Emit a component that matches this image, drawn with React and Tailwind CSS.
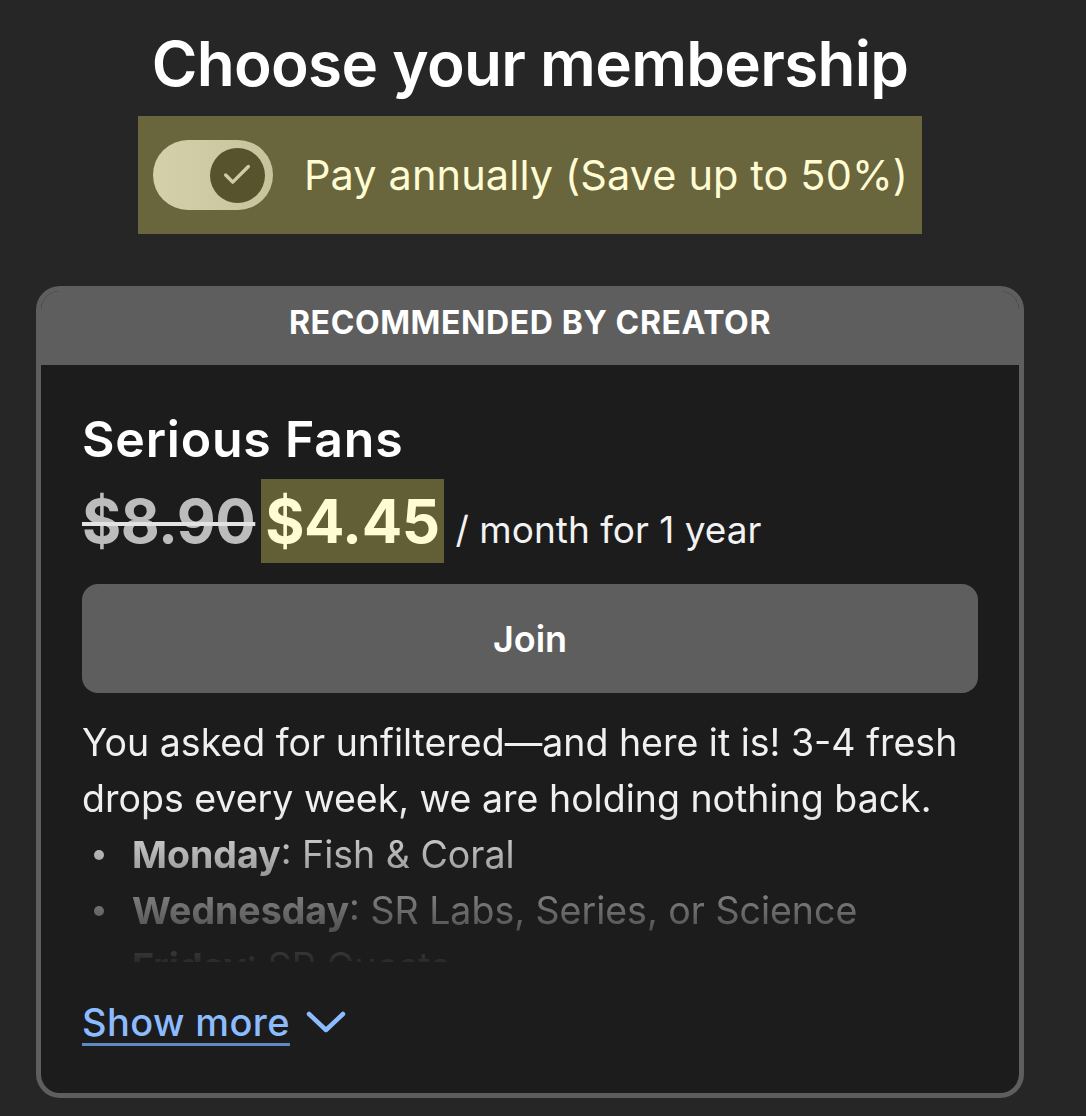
import { Check } from 'lucide-react'

const schedule = [
  { day: 'Monday', what: 'Fish & Coral' },
  { day: 'Wednesday', what: 'SR Labs, Series, or Science' },
  { day: 'Friday', what: 'SR Guests' },
]

const App = () => {
  return (
    <div className="min-h-screen bg-[#262626] font-['Inter',sans-serif]">
      <div className="w-[988px] ml-[36px] pt-[28px] flex flex-col items-center">

        {/* Heading */}
        <h1 className="text-[62px] leading-[72px] font-semibold text-white tracking-[-0.7px]">
          Choose your membership
        </h1>

        {/* Annual toggle */}
        <div className="mt-[16px] h-[118px] flex items-center pl-[15px] pr-[14px] bg-[#69653d]">
          <div className="w-[120px] h-[70px] rounded-full bg-gradient-to-r from-[#d4d0aa] to-[#c7c39b] flex items-center justify-end pr-[8px]">
            <div className="w-[55px] h-[55px] rounded-full bg-[#57532d] flex items-center justify-center">
              <Check size={34} strokeWidth={2.4} className="text-[#d0cca5]" />
            </div>
          </div>
          <span className="ml-[31px] text-[41.5px] leading-[48px] text-[#fffbd3] tracking-[0.1px]">
            Pay annually (Save up to 50%)
          </span>
        </div>

        {/* Tier card */}
        <div className="mt-[52px] w-full rounded-[24px] border-[5px] border-[#5e5e5e] bg-[#1c1c1c] overflow-hidden">
          <div className="h-[74px] pt-[16px] bg-[#5e5e5e] text-center">
            <p className="text-[32px] leading-[32px] font-bold text-white tracking-[0.6px]">RECOMMENDED BY CREATOR</p>
          </div>

          <div className="px-[41px] pt-[46px] pb-[51px]">
            <h2 className="text-[50px] leading-[56px] font-semibold text-white tracking-[0.8px]">Serious Fans</h2>

            <div className="mt-[12px] flex items-baseline">
              <span className="text-[60px] leading-[84px] font-bold text-[#bcbcbc] line-through decoration-[#e2e2e2] decoration-[4px] tracking-[-0.5px]">$8.90</span>
              <span className="ml-[6px] px-[4px] text-[60px] leading-[84px] font-bold text-[#fffbd3] bg-[#625e36] tracking-[-0.5px]">$4.45</span>
              <span className="ml-[12px] text-[37px] text-[#f2f2f2]">/ month for 1 year</span>
            </div>

            <button className="mt-[21px] w-full h-[109px] rounded-[16px] bg-[#5e5e5e] text-[36px] font-semibold text-white">
              Join
            </button>

            <div className="mt-[22px] h-[247px] overflow-hidden text-[37.5px] leading-[56px] text-[#f0f0f0] [mask-image:linear-gradient(to_bottom,black_92px,transparent_258px)]">
              <p>You asked for unfiltered—and here it is! 3-4 fresh drops every week, we are holding nothing back.</p>
              {schedule.map(item => (
                <div key={item.day} className="flex items-center">
                  <span className="ml-[12px] w-[10px] h-[10px] rounded-full bg-[#f0f0f0]" />
                  <span className="ml-[28px]"><b className="font-bold">{item.day}</b>: {item.what}</span>
                </div>
              ))}
            </div>

            <button className="mt-[40px] flex items-center text-[38px] leading-[40px] font-medium text-[#8cbcff] tracking-[0.4px]">
              <span className="underline decoration-[#5f88c4] decoration-[3px] underline-offset-[7px]">Show more</span>
              <svg width="40" height="26" viewBox="0 0 40 26" className="ml-[16px]" fill="none" stroke="currentColor" strokeWidth="4.5" strokeLinecap="round" strokeLinejoin="round">
                <path d="M3 5 L20 21 L37 5" />
              </svg>
            </button>
          </div>
        </div>
      </div>
    </div>
  )
}

export default App
